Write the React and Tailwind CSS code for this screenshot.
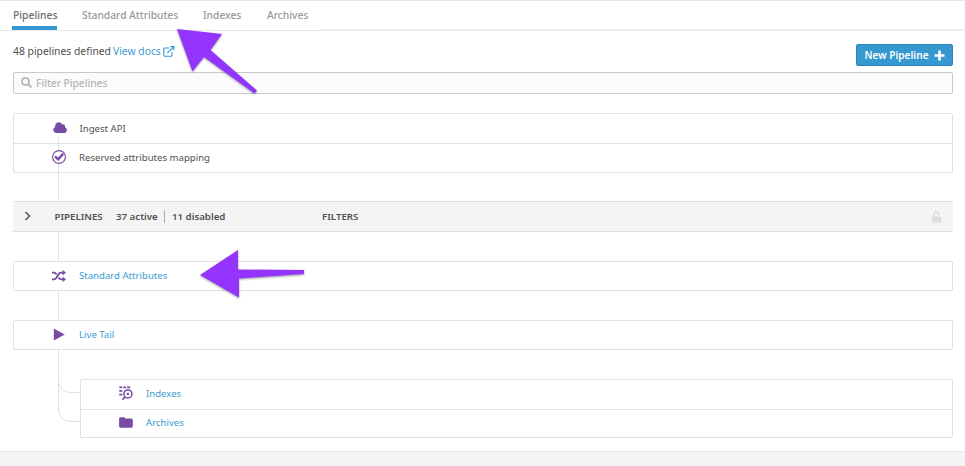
import React from "react";
import { FaSearch } from "react-icons/fa";

function Label({ children, className = "" }) {
  return <span className={"whitespace-nowrap leading-none " + className}>{children}</span>;
}

function Row({ icon, children, className = "" }) {
  return (
    <div className={"flex items-center " + className}>
      <div className="relative z-10 flex w-[14px] justify-center pb-px text-[#774aa4]">{icon}</div>
      <Label className="ml-[13px] text-[9.6px]">{children}</Label>
    </div>
  );
}

function Connector({ className = "" }) {
  return <div className={"ml-[45px] w-px bg-[#dfe0e2] " + className} />;
}

function CloudIcon() {
  return (
    <svg className="mb-[2px] shrink-0" width="14" height="11" viewBox="0 0 15 11" preserveAspectRatio="none" fill="currentColor">
      <path d="M3.6 11A3.2 3.2 0 0 1 2.2 4.9C2.1 2.2 3.8.2 6.3.2c1.7 0 3.1.9 3.7 2.4 1.4-.7 3 .3 2.9 1.9q0 .4-.2.8A2.9 2.9 0 0 1 12 11Z" />
    </svg>
  );
}

function CheckCircle() {
  return (
    <svg className="mb-px shrink-0" width="14" height="14" viewBox="0 0 14 14" fill="none" stroke="currentColor">
      <circle cx="7" cy="7" r="6.4" fill="white" strokeWidth="1.1" />
      <path d="M3 6.4 6.1 9.3 11.2 3.9" strokeWidth="2.4" />
    </svg>
  );
}

function ShuffleIcon() {
  return (
    <svg className="shrink-0" width="14" height="12" viewBox="0 0 14 12" fill="none" stroke="currentColor" strokeWidth="1.9">
      <path d="M0 2.6h2q1.2 0 2 1.1l.6.8M0 9.4h2q1.2 0 2-1.1l3-4.6q.8-1.1 2-1.1h2.2M6.5 7.5l.6.8q.8 1.1 2 1.1h2.1" />
      <path d="M10.6 0 14 2.6 10.6 5.4ZM10.6 6.6l3.4 2.8-3.4 2.6Z" fill="currentColor" stroke="none" />
    </svg>
  );
}

function PlayIcon() {
  return (
    <svg className="shrink-0" width="12" height="13" viewBox="0 0 12 13" fill="currentColor">
      <path d="M.8.5 11.8 6.5.8 12.4Z" />
    </svg>
  );
}

function IndexIcon() {
  return (
    <svg className="shrink-0" width="14" height="14" viewBox="0 0 14 14" fill="none" stroke="currentColor">
      <path d="M.3 1.3h3M4.4 1.3h2.8M8.2 1.3h2.9M.3 4.9h3M.3 8.7h3" strokeWidth="1.7" />
      <circle cx="8.9" cy="7.9" r="4" strokeWidth="1.5" />
      <path d="m6.2 10.8-2.7 2.8" strokeWidth="1.7" />
      <circle cx="8.9" cy="7.9" r="1.2" fill="currentColor" stroke="none" />
    </svg>
  );
}

function FolderIcon() {
  return (
    <svg className="shrink-0" width="14" height="11" viewBox="0 0 14 11" fill="currentColor">
      <path d="M1.5.2h3.4q1.2 0 1.3 1.3h6.1q1.5 0 1.5 1.5v6.3q0 1.4-1.5 1.4H1.5Q.1 10.7.1 9.3V1.6Q.1.2 1.5.2Z" />
    </svg>
  );
}

function UnlockIcon() {
  return (
    <svg className="ml-auto mr-[12px]" width="9" height="12" viewBox="0 0 9 12" fill="none">
      <path d="M2 6V3.4a2.4 2.4 0 0 1 4.8 0v.8" stroke="#dedce2" strokeWidth="1.6" />
      <rect y="5.5" width="9" height="6" rx=".8" fill="#dedce2" />
    </svg>
  );
}

function PlusIcon() {
  return (
    <svg className="shrink-0" width="11" height="11" viewBox="0 0 11 11" stroke="white" strokeWidth="2.6">
      <path d="M5.5.5v10M.5 5.5h10" />
    </svg>
  );
}

function ExternalIcon() {
  return (
    <svg width="12" height="11" viewBox="0 0 12 11" fill="none" stroke="#3598d0" strokeWidth="1.1">
      <path d="M6 2H1.5Q.8 2 .8 2.7v6.8q0 .7.7.7h6.8q.7 0 .7-.7V6M4.3 7 10.7.8M7.3.6h3.6v3.6" />
    </svg>
  );
}

const arrowShadow = "drop-shadow-[0_1px_1px_rgba(0,0,0,0.4)]";

export default function App() {
  return (
    <div className="relative flex h-[466px] w-[965px] flex-col overflow-hidden bg-white font-['Noto_Sans','Open_Sans',sans-serif] text-[#505055]">
      <nav className="flex h-[31px] shrink-0 border-t border-[#e8e8e8] text-[10.35px] font-medium text-[#99999e]">
        <div className="flex w-[321px] items-start border-b border-[#e8e8e8] pl-3">
          <div className="flex h-[29px] w-[45px] flex-col border-b-4 border-[#3598d0] pl-px pt-[9px] text-[#6c6c71]">
            <Label>Pipelines</Label>
          </div>
          <Label className="ml-[25px] w-[121px] pt-[9px] tracking-[-0.06px]">Standard Attributes</Label>
          <Label className="w-[64px] pt-[9px] tracking-[-0.05px]">Indexes</Label>
          <Label className="pt-[9px] tracking-[-0.05px]">Archives</Label>
        </div>
        <div className="h-[30px] flex-1 border-b-2 border-[#ededed]" />
      </nav>

      <main className="flex h-[420px] shrink-0 flex-col pl-[13px] pr-3">
        <div className="flex h-[41px] items-start justify-between">
          <div className="flex items-center pt-[15px] text-[10.35px]">
            <Label>48 pipelines defined</Label>
            <Label className="ml-[2px] text-[#3b9dd3]">View docs</Label>
            <span className="ml-[2px]"><ExternalIcon /></span>
          </div>
          <button className="mt-[13px] flex h-[22px] w-[97px] items-center rounded-xs border border-[#2a85ba] bg-[#3598d0] pl-[7.5px] text-left text-[10.1px] font-semibold text-white">
            <Label className="w-[69px]">New Pipeline</Label>
            <PlusIcon />
          </button>
        </div>
        <div className="flex h-[22px] shrink-0 items-center rounded-xs border border-[#cacacc] bg-[#fbfbfb] pl-[7px] text-[10.2px] font-medium text-[#b4b4b8]">
          <FaSearch size={11} className="mb-px" />
          <Label className="ml-[4px]">Filter Pipelines</Label>
        </div>

        <section className="relative mt-[19px] h-[60px] shrink-0 rounded-xs border border-[#dfe0e2]">
          <div className="absolute left-[44px] top-[23px] h-[36px] w-px bg-[#dfe0e2]" />
          <Row className="h-[30px] border-b border-[#dfe0e2] pl-[38.5px]" icon={<CloudIcon />}>Ingest API</Row>
          <Row className="h-[28px] pl-[38px]" icon={<CheckCircle />}>Reserved attributes mapping</Row>
        </section>
        <Connector className="h-[28px]" />

        <section className="flex h-[31px] shrink-0 items-center border-y border-[#dfe0e2] bg-[#f4f4f4] text-[9.7px] font-semibold">
          <svg className="mb-[2px] ml-[11px]" width="8" height="10" viewBox="0 0 8 10" fill="none" stroke="#4b4b50" strokeWidth="1.4"><path d="m1.5 1 4 4-4 4" /></svg>
          <Label className="ml-[22.5px] w-[61.5px]">PIPELINES</Label>
          <Label className="w-[48px]">37 active</Label>
          <div className="h-[13px] w-px bg-[#aaaaae]" />
          <Label className="ml-[7px] w-[150px]">11 disabled</Label>
          <Label>FILTERS</Label>
          <UnlockIcon />
        </section>
        <Connector className="h-[29px]" />

        <Row className="h-[30px] shrink-0 rounded-xs border border-[#dfe0e2] pl-[38px] text-[#3b9dd3]" icon={<ShuffleIcon />}>Standard Attributes</Row>
        <Connector className="h-[29px]" />
        <Row className="h-[30px] shrink-0 rounded-xs border border-[#dfe0e2] pl-[38px] text-[#3b9dd3]" icon={<PlayIcon />}>Live Tail</Row>

        <div className="flex h-[88px] shrink-0">
          <svg className="shrink-0" width="67" height="88" viewBox="0 0 67 88" fill="none" stroke="#dfe0e2">
            <path d="M45.5 0V31Q47 42.5 58 42.5H67M45.5 30V58Q45.5 71.5 58 71.5H67" />
          </svg>
          <section className="mt-[29px] h-[59px] flex-1 rounded-xs border border-[#dfe0e2] text-[#3b9dd3]">
            <Row className="h-[30px] border-b border-[#dfe0e2] pb-[2px] pl-[38px]" icon={<IndexIcon />}>Indexes</Row>
            <Row className="h-[27px] pb-[2px] pl-[38px]" icon={<FolderIcon />}>Archives</Row>
          </section>
        </div>
      </main>
      <footer className="flex-1 border-t border-[#e8e8e8] bg-[#f4f4f4]" />

      <svg className={"pointer-events-none absolute left-0 top-0 z-20 " + arrowShadow} width="965" height="466" fill="#9435ff">
        <path d="M177 29 222 34 210.5 50 257 90.5 254.5 93.5 204 57 192.5 71.5Z" />
        <path d="M200 275 238 250V269.5L304 270V274L239 278.5V297.5Z" />
      </svg>
    </div>
  );
}
